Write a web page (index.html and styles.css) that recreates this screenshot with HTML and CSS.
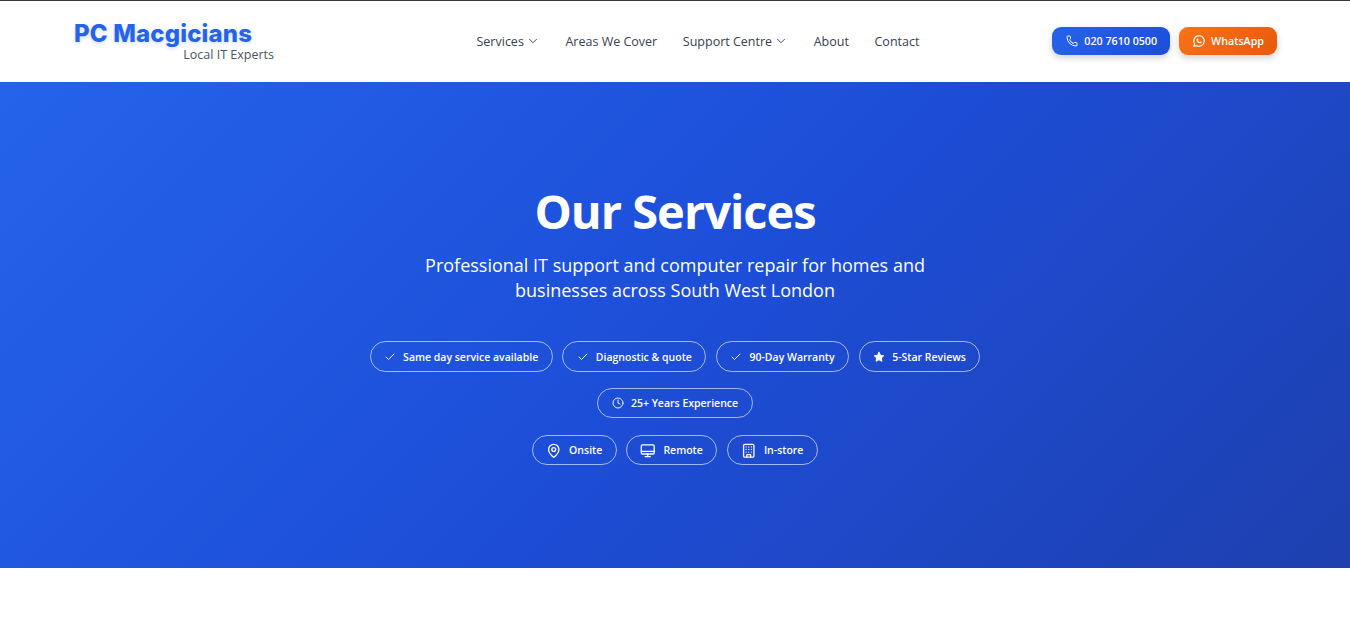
FILE: index.html
```html
<!DOCTYPE html>
<html lang="en">
<head>
  <meta charset="UTF-8" />
  <meta name="viewport" content="width=device-width, initial-scale=1.0"/>
  <title>Our Services - PC Macgicians</title>
  <link rel="stylesheet" href="styles.css">
</head>
<body>

<!-- HEADER -->
<header class="site-header">
  <a class="logo" href="#">
    <span class="logo-name">PC Macgicians</span>
    <span class="logo-tag">Local IT Experts</span>
  </a>

  <nav class="main-nav">
    <a href="#">Services
      <svg class="chevron" viewBox="0 0 24 24"><path d="m6 9 6 6 6-6"/></svg>
    </a>
    <a href="#">Areas We Cover</a>
    <a href="#">Support Centre
      <svg class="chevron" viewBox="0 0 24 24"><path d="m6 9 6 6 6-6"/></svg>
    </a>
    <a href="#">About</a>
    <a href="#">Contact</a>
  </nav>

  <div class="header-actions">
    <a class="btn btn-phone" href="#">
      <svg class="icon" viewBox="0 0 24 24"><path d="M13.832 16.568a1 1 0 0 0 1.213-.303l.355-.465A2 2 0 0 1 17 15h3a2 2 0 0 1 2 2v3a2 2 0 0 1-2 2A18 18 0 0 1 2 4a2 2 0 0 1 2-2h3a2 2 0 0 1 2 2v3a2 2 0 0 1-.8 1.6l-.468.351a1 1 0 0 0-.292 1.233 14 14 0 0 0 6.392 6.384"/></svg>
      020 7610 0500
    </a>
    <a class="btn btn-whatsapp" href="#">
      <svg class="icon icon-wa" viewBox="0 0 24 24"><path d="M3 21l1.65-3.8a9 9 0 1 1 3.4 2.9L3 21"/><path d="M9 10a.5.5 0 0 0 1 0V9a.5.5 0 0 0-1 0v1a5 5 0 0 0 5 5h1a.5.5 0 0 0 0-1h-1a.5.5 0 0 0 0 1"/></svg>
      WhatsApp
    </a>
  </div>
</header>

<!-- HERO -->
<section class="hero">
  <h1>Our Services</h1>
  <p class="hero-text">Professional IT support and computer repair for homes and businesses across South West London</p>

  <div class="badges">
    <span class="badge"><svg class="icon" viewBox="0 0 24 24"><path d="M20 6 9 17l-5-5"/></svg>Same day service available</span>
    <span class="badge"><svg class="icon" viewBox="0 0 24 24"><path d="M20 6 9 17l-5-5"/></svg>Diagnostic &amp; quote</span>
    <span class="badge"><svg class="icon" viewBox="0 0 24 24"><path d="M20 6 9 17l-5-5"/></svg>90-Day Warranty</span>
    <span class="badge"><svg class="icon icon-fill" viewBox="0 0 24 24"><path d="M12 2.500l2.950 6 6.600.950-4.780 4.650 1.130 6.570L12 17.560l-5.900 3.100 1.130-6.570L2.450 9.450l6.600-.950z"/></svg>5-Star Reviews</span>
    <span class="badge"><svg class="icon" viewBox="0 0 24 24"><circle cx="12" cy="12" r="10"/><path d="M12 6v6l4 2"/></svg>25+ Years Experience</span>
  </div>

  <div class="badges badges-last">
    <span class="badge badge-lg"><svg class="icon" viewBox="0 0 24 24"><path d="M20 10c0 5-5.500 10.200-7.400 11.800a1 1 0 0 1-1.200 0C9.500 20.200 4 15 4 10a8 8 0 0 1 16 0"/><circle cx="12" cy="10" r="3"/></svg>Onsite</span>
    <span class="badge badge-lg"><svg class="icon" viewBox="0 0 24 24"><rect x="2" y="3" width="20" height="14" rx="2"/><path d="M2 13h20M8 21h8M12 17v4"/></svg>Remote</span>
    <span class="badge badge-lg"><svg class="icon" viewBox="0 0 24 24"><rect x="4" y="2" width="16" height="20" rx="2"/><path d="M9 22v-4h6v4M8 6h.01M16 6h.01M12 6h.01M12 10h.01M12 14h.01M16 10h.01M16 14h.01M8 10h.01M8 14h.01"/></svg>In-store</span>
  </div>
</section>

<div class="page-rest"></div>

</body>
</html>
```

FILE: styles.css
```css
* {
  box-sizing: border-box;
  font-family: 'Open Sans', 'Noto Sans', sans-serif;
}

body {
  margin: 0;
  background: #fff;
  color: #374151;
}

a {
  color: inherit;
  text-decoration: none;
}

svg {
  flex-shrink: 0;
}

.site-header {
  height: 82px;
  border-top: 1px solid #3a3a3a;
  padding: 0 73px 1px 74px;
  display: flex;
  align-items: center;
  background: #fff;
}

.logo {
  width: 200px;
  display: flex;
  flex-direction: column;
}

.logo-name {
  font-family: 'Inter', sans-serif;
  font-size: 24px;
  line-height: 26px;
  font-weight: 800;
  letter-spacing: 0.15px;
  color: #2563eb;
  text-shadow: 0 2px 4px rgba(37, 99, 235, 0.2);
}

.logo-tag {
  align-self: flex-end;
  font-size: 12.5px;
  line-height: 15px;
  font-weight: 500;
  color: #4b5563;
}

.main-nav {
  margin-left: 202.5px;
  display: flex;
  align-items: center;
  gap: 25.6px;
  font-size: 12.5px;
  font-weight: 500;
}

.main-nav a {
  display: flex;
  align-items: center;
  gap: 2px;
}

.chevron {
  width: 14px;
  height: 14px;
  fill: none;
  stroke: currentColor;
  stroke-width: 1.6;
  stroke-linecap: round;
  stroke-linejoin: round;
}

.header-actions {
  margin-left: auto;
  display: flex;
  gap: 9px;
}

.btn {
  height: 28px;
  padding: 0 13px 0 14px;
  display: flex;
  align-items: center;
  gap: 6px;
  border-radius: 9px;
  color: #fff;
  font-size: 10.7px;
  font-weight: 600;
  box-shadow: 0 3px 7px rgba(0, 0, 0, 0.18);
}

.btn-phone {
  background: linear-gradient(135deg, #2563eb, #1d4ed8);
}

.btn-whatsapp {
  padding-left: 13px;
  gap: 5px;
  background: linear-gradient(135deg, #f97316, #ea580c);
}

.icon {
  width: 12px;
  height: 12px;
  fill: none;
  stroke: currentColor;
  stroke-width: 2;
  stroke-linecap: round;
  stroke-linejoin: round;
}

.icon-wa {
  width: 14px;
  height: 14px;
}

.hero {
  height: 486px;
  padding-top: 97px;
  background: linear-gradient(135deg, #2563eb 0%, #1d4ed8 50%, #1e40af 100%);
  color: #fff;
  display: flex;
  flex-direction: column;
  align-items: center;
  text-align: center;
}

.hero h1 {
  margin: 0;
  font-size: 47px;
  line-height: 64px;
  font-weight: 700;
  letter-spacing: -1px;
}

.hero-text {
  margin: 10px 0 0;
  width: 540px;
  font-size: 18px;
  line-height: 25px;
}

.badges {
  width: 672px;
  margin-top: 38px;
  display: flex;
  flex-wrap: wrap;
  justify-content: center;
  gap: 16px 9.6px;
}

.badges-last {
  margin-top: 16.5px;
}

.badge {
  height: 30.5px;
  padding: 1px 13.5px 0;
  display: flex;
  align-items: center;
  gap: 7px;
  border: 1px solid rgba(255, 255, 255, 0.6);
  border-radius: 999px;
  font-size: 10.5px;
  font-weight: 600;
}

.badge .icon {
  stroke-width: 1.8;
}

.badge .icon-fill {
  fill: currentColor;
}

.badge-lg {
  padding: 1px 13.5px 0 13px;
  gap: 7.5px;
}

.badge-lg .icon {
  width: 15.5px;
  height: 15.5px;
  stroke-width: 2;
}

.page-rest {
  height: 64px;
  background: #fff;
}
```
